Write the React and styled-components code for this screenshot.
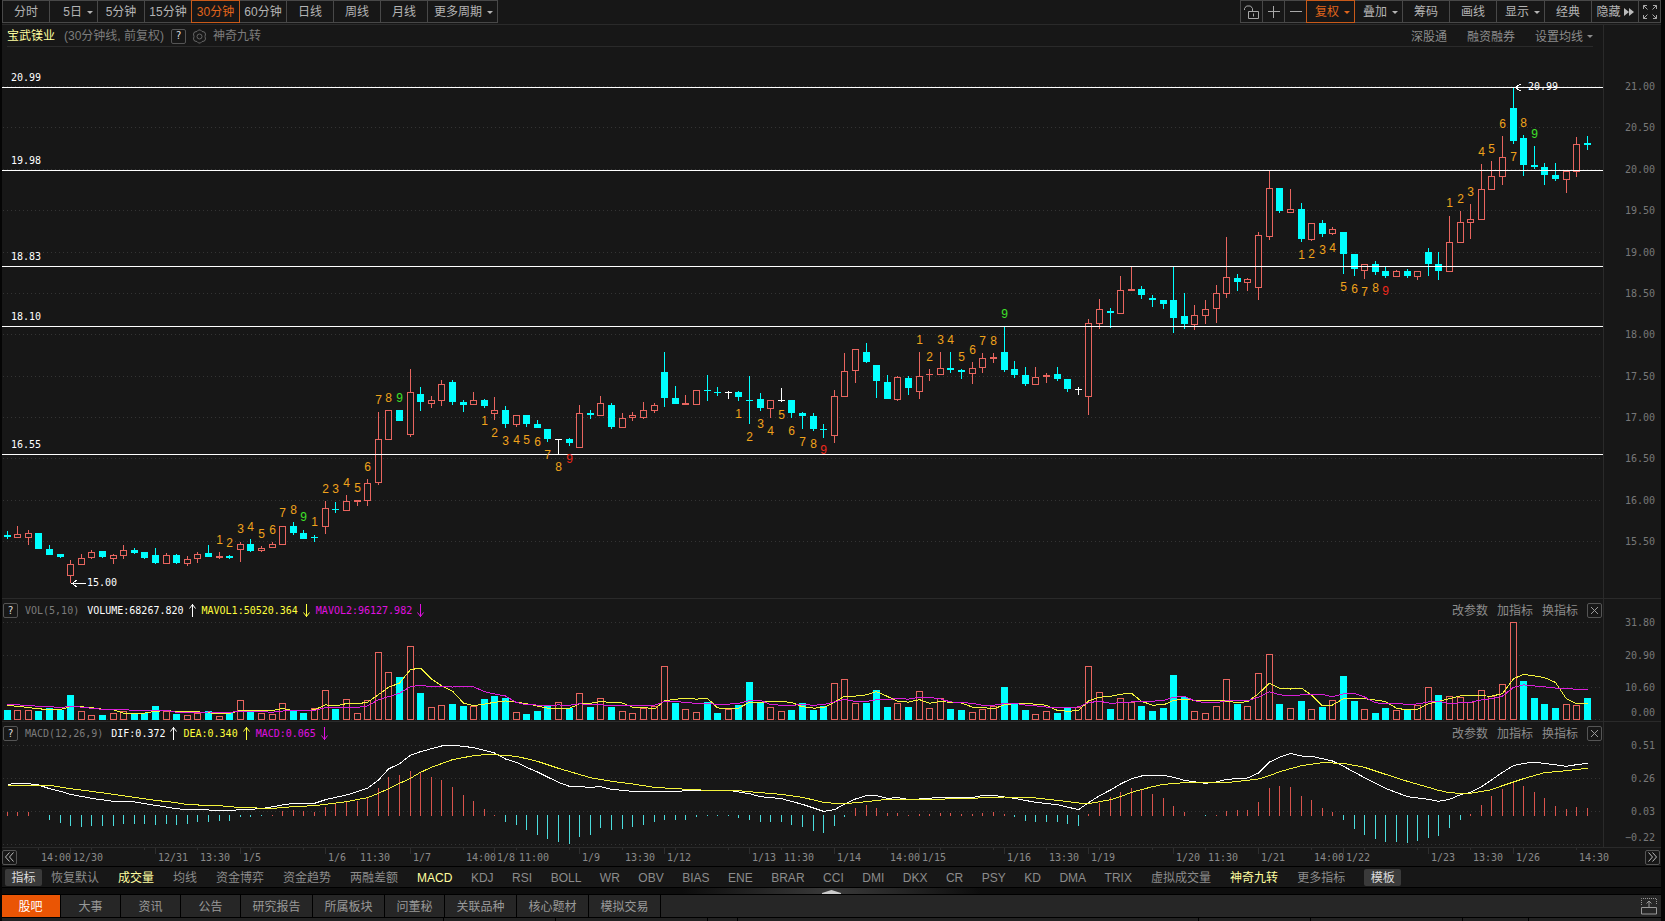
import React, { useLayoutEffect, useRef, useState } from "react";
import styled, { createGlobalStyle } from "styled-components";

const RED = "#e8655f";
const CYAN = "#00ffff";
const BG = "#171717";

// kind (r up, c down, w flat), high, body top, body bottom, low
const CANDLES = `
c 531 535 537 539|r 526 534 538 538|r 530 533 538 545|c 533 533 549 549|c 545 549 555 555
c 554 554 557 558|r 560 564 576 583|r 554 558 565 565|r 550 552 558 559|c 551 551 557 558
r 554 555 559 564|r 545 550 556 559|c 548 550 553 554|c 552 552 558 559|c 548 555 563 564
r 553 555 564 564|c 554 555 563 564|r 556 559 564 566|r 552 554 559 563|c 545 553 557 557
r 552 556 558 559|c 555 556 558 559|r 542 544 550 562|c 539 544 551 552|r 546 548 551 552
r 542 544 548 548|r 526 526 545 545|c 522 526 533 535|c 530 533 539 539|c 535 537 538 542
r 501 508 527 534|c 502 509 510 513|r 495 501 511 511|r 500 500 502 506|r 479 483 501 506
r 412 439 483 485|r 410 410 440 440|c 410 410 421 421|r 369 392 435 437|c 387 394 402 411
r 396 400 404 408|r 380 384 401 406|c 380 382 402 405|c 400 402 405 412|r 392 400 405 405
c 399 400 406 408|r 397 410 414 420|c 406 410 424 428|r 415 415 425 427|c 415 415 424 427
c 420 424 428 428|c 429 429 439 442|w 439 439 440 454|c 438 439 443 446|r 405 413 448 448
c 410 413 415 419|r 396 403 416 416|c 403 405 427 429|r 413 418 428 428|r 412 415 418 421
r 402 410 418 419|r 403 405 411 413|c 352 372 398 407|c 386 398 404 404|r 395 403 405 405
r 390 390 405 405|c 375 390 391 401|c 387 392 393 396|w 391 392 393 399|c 391 392 397 401
c 376 400 401 424|c 393 399 408 411|r 400 400 409 418|w 388 400 401 402|c 400 400 413 418
c 412 413 416 429|c 413 416 429 431|c 424 429 430 438|r 390 396 436 443|r 353 371 397 397
r 349 349 371 383|c 343 352 362 363|c 365 365 381 398|c 375 382 399 399|r 376 377 400 401
c 376 378 388 395|r 352 376 392 399|r 369 374 375 381|r 352 368 375 375|c 352 368 370 373
c 369 370 372 379|r 362 368 374 384|r 353 358 368 373|r 353 357 359 363|c 327 352 370 372
c 361 369 375 378|c 367 375 384 386|r 367 377 385 385|r 373 375 377 383|c 367 374 379 381
c 379 379 389 392|w 387 389 390 395|r 319 323 397 415|r 299 309 324 329|c 308 311 313 328
r 276 290 314 314|r 267 289 291 291|c 286 289 295 299|c 295 298 300 307|c 300 300 304 309
c 267 300 318 333|c 293 316 324 329|r 305 315 325 330|r 300 309 316 324|r 285 293 309 323
r 237 277 294 298|c 274 278 282 291|r 278 279 283 291|r 232 235 288 300|r 171 188 237 240
c 188 188 211 213|r 189 209 213 213|c 203 209 239 242|r 223 223 240 241|c 220 223 234 237
r 227 229 234 235|c 232 232 254 274|c 254 254 269 276|r 264 264 271 279|c 261 264 272 275
c 267 271 276 278|r 270 271 277 277|c 269 271 276 278|r 271 271 277 280|c 248 252 264 276
c 252 264 271 280|r 216 242 272 272|r 211 222 243 243|r 204 219 223 239|r 164 189 220 220
r 161 176 190 190|r 136 157 177 185|c 88 108 141 144|c 135 138 165 176|c 146 165 167 169
c 163 167 175 185|c 163 175 179 181|r 171 171 180 193|r 137 144 172 177|c 136 143 145 150`
  .trim()
  .split(/[|\n]/)
  .map((row) => {
    const [kind, ...rest] = row.split(" ");
    return [kind, ...rest.map(Number)];
  });

// candle index, digit, text centre
const COUNTS = [
  [20, 1, 540], [21, 2, 543], [22, 3, 529], [23, 4, 527], [24, 5, 534],
  [25, 6, 530], [26, 7, 513], [27, 8, 510], [28, 9, 517, "up"], [29, 1, 522],
  [30, 2, 489], [31, 3, 489], [32, 4, 483], [33, 5, 488], [34, 6, 467],
  [35, 7, 400], [36, 8, 398], [37, 9, 398, "up"],
  [45, 1, 421], [46, 2, 433], [47, 3, 441], [48, 4, 440], [49, 5, 440],
  [50, 6, 442], [51, 7, 455], [52, 8, 467], [53, 9, 459, "down"],
  [69, 1, 414], [70, 2, 437], [71, 3, 424], [72, 4, 431], [73, 5, 415],
  [74, 6, 431], [75, 7, 442], [76, 8, 444], [77, 9, 450, "down"],
  [86, 1, 340], [87, 2, 357], [88, 3, 340], [89, 4, 340], [90, 5, 357],
  [91, 6, 350], [92, 7, 341], [93, 8, 341], [94, 9, 314, "up"],
  [122, 1, 255], [123, 2, 254], [124, 3, 250], [125, 4, 248], [126, 5, 287],
  [127, 6, 289], [128, 7, 292], [129, 8, 288], [130, 9, 291, "down"],
  [136, 1, 203], [137, 2, 199], [138, 3, 192], [139, 4, 152], [140, 5, 149],
  [141, 6, 124], [142, 7, 157], [143, 8, 123], [144, 9, 134, "up"],
];
const COUNT_COLORS = { up: "#3fe02a", down: "#f0281c" };

const LEVELS = [
  ["20.99", 87],
  ["19.98", 170],
  ["18.83", 266],
  ["18.10", 326],
  ["16.55", 454],
];

const PRICE_TICKS = [
  ["21.00", 86], ["20.50", 127], ["20.00", 169], ["19.50", 210],
  ["19.00", 252], ["18.50", 293], ["18.00", 334], ["17.50", 376],
  ["17.00", 417], ["16.50", 458], ["16.00", 500], ["15.50", 541],
];

// negative volumes are down bars
const VOLUMES = [
  -11, 11, 11, -10, -13, -11, -27, 10, 5, -5, 7, 10, -7, -8, -15, 10, -6, 5, 8,
  -10, 4, -8, 21, -9, 7, 6, 18, -10, -8, 13, 32, -12, 23, 7, 21, 73, 51, -46,
  79, -29, 14, 16, -17, -15, 15, -22, -26, -24, 9, -6, -10, -15, 19, -13, 29,
  -14, 24, -14, 10, 7, 13, 15, 58, -18, 12, 9, -19, -7, 12, -16, -41, -18, 14,
  10, -11, -18, -11, -15, 40, 44, 18, -18, -32, -14, 18, -14, 31, 13, 24, -12,
  -11, 9, 12, 15, -35, -17, -11, 6, 10, -7, -13, 14, 58, 30, -12, 24, 19, -15,
  -10, -13, -48, -25, 10, 7, 15, 44, -17, 15, 50, 71, -17, 13, -20, 12, -14, 21,
  -47, -20, 12, -7, -13, 11, -11, 16, 35, -27, 26, 25, 19, 32, 26, 39, 105, -42,
  -24, -17, -13, 17, 16, -24,
];
const EARLIER_VOLUMES = [18, 18, 18, 18, 18, 17, 17, 17, 17];
const BAR_SCALE = 14 / 15;

const MACD_BARS = [
  4, 4, 4, 0, -5, -9, -12, -13, -12, -12, -12, -10, -10, -10, -11, -10, -11,
  -10, -8, -7, -6, -6, -2, -2, -1, 1, 5, 6, 5, 4, 10, 13, 16, 16, 20, 30, 42,
  44, 48, 46, 42, 39, 31, 22, 16, 8, 1, -7, -11, -16, -21, -26, -29, -31, -24,
  -21, -14, -16, -15, -13, -11, -8, -5, -5, -5, -2, -1, -1, -1, -3, -5, -8, -8,
  -8, -11, -13, -17, -19, -12, -2, 9, 12, 9, 3, 3, 1, 2, 2, 3, 3, 2, 2, 3, 4, 2,
  -2, -6, -7, -7, -8, -10, -12, 2, 14, 20, 26, 30, 29, 24, 19, 11, 4, 0, -1, 1,
  5, 6, 6, 15, 30, 32, 31, 21, 17, 9, 4, -5, -15, -21, -26, -29, -29, -30, -28,
  -25, -23, -14, -5, 2, 12, 21, 29, 35, 32, 26, 19, 11, 7, 10, 9,
];

// index, level (three steps to a pixel, counted from the top of the volume pane)
const DIF = [
  [0, 553], [1, 550], [2, 551], [3, 555], [4, 566], [5, 574], [6, 583],
  [8, 595], [10, 604], [12, 606], [14, 616], [16, 626], [17, 629], [21, 631],
  [24, 626], [26, 615], [27, 610], [29, 610], [30, 599], [32, 585], [34, 565],
  [35, 540], [36, 507], [37, 491], [38, 466], [39, 455], [40, 446], [41, 438],
  [42, 436], [43, 439], [44, 443], [45, 451], [46, 459], [47, 477], [48, 487],
  [49, 502], [50, 516], [51, 531], [52, 547], [53, 559], [54, 560], [55, 562],
  [56, 560], [57, 568], [59, 574], [63, 574], [65, 571], [68, 571], [70, 581],
  [71, 590], [73, 596], [75, 613], [76, 624], [77, 634], [78, 629], [79, 612],
  [80, 597], [81, 587], [82, 587], [83, 595], [84, 593], [85, 598], [86, 597],
  [88, 592], [91, 593], [92, 586], [93, 586], [95, 595], [97, 607], [99, 614],
  [101, 629], [102, 608], [103, 587], [104, 570], [105, 552], [106, 536],
  [107, 528], [109, 526], [110, 532], [111, 541], [113, 550], [114, 546],
  [115, 538], [117, 534], [118, 519], [119, 486], [120, 472], [121, 460],
  [122, 468], [123, 469], [124, 476], [125, 483], [126, 499], [128, 533],
  [130, 565], [132, 590], [134, 598], [135, 604], [136, 598], [137, 584],
  [138, 577], [139, 560], [140, 540], [141, 517], [142, 497], [143, 490],
  [144, 487], [145, 490], [147, 499], [148, 494], [149, 490],
];

const DEA = [
  [0, 556], [4, 556], [6, 566], [8, 574], [10, 583], [12, 592], [14, 601],
  [16, 608], [17, 614], [20, 617], [22, 623], [25, 625], [27, 620], [29, 617],
  [32, 605], [34, 593], [35, 580], [36, 566], [37, 550], [38, 535], [39, 517],
  [40, 502], [41, 491], [42, 479], [44, 467], [45, 464], [46, 464], [48, 469],
  [50, 484], [52, 505], [55, 533], [57, 544], [59, 552], [61, 562], [63, 566],
  [66, 571], [69, 572], [71, 578], [73, 583], [75, 592], [77, 607], [78, 610],
  [79, 611], [81, 605], [83, 598], [87, 598], [90, 596], [94, 591], [97, 594],
  [99, 601], [101, 609], [102, 611], [104, 599], [105, 590], [106, 577],
  [108, 560], [109, 553], [111, 548], [115, 548], [118, 537], [119, 527],
  [120, 515], [122, 497], [124, 488], [126, 490], [128, 502], [130, 523],
  [132, 544], [134, 562], [135, 571], [136, 578], [137, 580], [138, 580],
  [140, 569], [141, 557], [143, 536], [145, 518], [147, 512], [149, 505],
];

const TIMES = [
  [3, "14:00"], [6, "12/30"], [14, "12/31"], [18, "13:30"], [22, "1/5"],
  [30, "1/6"], [33, "11:30"], [38, "1/7"], [43, "14:00"], [46, "1/8"],
  [48, "11:00"], [54, "1/9"], [58, "13:30"], [62, "1/12"], [70, "1/13"],
  [73, "11:30"], [78, "1/14"], [83, "14:00"], [86, "1/15"], [94, "1/16"],
  [98, "13:30"], [102, "1/19"], [110, "1/20"], [113, "11:30"], [118, "1/21"],
  [123, "14:00"], [126, "1/22"], [134, "1/23"], [138, "13:30"], [142, "1/26"],
  [148, "14:30"],
];

const PERIODS = [
  { name: "分时" },
  { name: "5日", caret: true, wide: true },
  { name: "5分钟" },
  { name: "15分钟" },
  { name: "30分钟", active: true, wide: true },
  { name: "60分钟" },
  { name: "日线" },
  { name: "周线" },
  { name: "月线" },
  { name: "更多周期", caret: true, size: 71 },
];

const TOOLS = [
  { name: "复权", caret: true, active: true, wide: true },
  { name: "叠加", caret: true, wide: true },
  { name: "筹码" },
  { name: "画线" },
  { name: "显示", caret: true, wide: true },
  { name: "经典" },
];

const STUDIES = [
  "MACD", "KDJ", "RSI", "BOLL", "WR", "OBV", "BIAS", "ENE", "BRAR", "CCI",
  "DMI", "DKX", "CR", "PSY", "KD", "DMA", "TRIX",
];

const TABS = [
  "股吧", "大事", "资讯", "公告", "研究报告", "所属板块", "问董秘", "关联品种",
  "核心题材", "模拟交易",
];

const FOOTER_CELLS = [442, 112, 152, 30, 461, 112, 152, 66];

const xAt = (index, width) => Math.round(4.5 + ((width - 10) / 150) * index);

const movingAverage = (count) => {
  const all = [...EARLIER_VOLUMES, ...VOLUMES].map(Math.abs);
  return VOLUMES.map((_, i) => {
    const end = i + EARLIER_VOLUMES.length + 1;
    return all.slice(end - count, end).reduce((a, b) => a + b, 0) / count;
  });
};

const toPoints = (pairs, width) =>
  pairs.map(([i, y]) => `${xAt(i, width) + 0.5},${y}`).join(" ");

function useWidth() {
  const ref = useRef(null);
  const [width, setWidth] = useState(1601);
  useLayoutEffect(() => {
    const update = () => setWidth(ref.current.clientWidth);
    update();
    const observer = new ResizeObserver(update);
    observer.observe(ref.current);
    return () => observer.disconnect();
  }, []);
  return [ref, width];
}

function Grid({ lines, width }) {
  return lines.map((y) => (
    <line
      key={y}
      x1="1"
      x2={width}
      y1={y + 0.5}
      y2={y + 0.5}
      stroke="#343434"
      strokeDasharray="1 3"
    />
  ));
}

function Bar({ x, y, height, hollow }) {
  return hollow ? (
    <rect
      x={x - 2.5}
      y={y + 0.5}
      width="6"
      height={Math.max(height - 1, 1)}
      fill={BG}
      stroke={RED}
    />
  ) : (
    <rect x={x - 3} y={y} width="7" height={height} fill={CYAN} />
  );
}

function Candle({ x, candle }) {
  const [kind, high, top, bottom, low] = candle;
  const color = { r: RED, c: CYAN, w: "#fff" }[kind];
  const hollow = kind === "r" && bottom - top > 2;
  return (
    <g>
      <rect x={x} y={high} width="1" height={low - high} fill={color} />
      {hollow ? (
        <Bar x={x} y={top} height={bottom - top} hollow />
      ) : (
        <rect
          x={x - 3}
          y={top}
          width="7"
          height={bottom - top}
          fill={color}
        />
      )}
    </g>
  );
}

function PriceChart({ width }) {
  const peak = xAt(142, width);
  const trough = xAt(6, width);
  return (
    <Plot width={width} height="551" viewBox={`0 47 ${width} 551`}>
      <Grid lines={PRICE_TICKS.map(([, y]) => y)} width={width} />
      {CANDLES.map((candle, i) => (
        <Candle key={i} x={xAt(i, width)} candle={candle} />
      ))}
      {LEVELS.map(([label, y]) => (
        <g key={label}>
          <rect x="0" y={y} width={width} height="1" fill="#fff" />
          <NumberText x="9" y={y - 6} fill="#fff">
            {label}
          </NumberText>
        </g>
      ))}
      {COUNTS.map(([i, digit, y, end]) => (
        <CountText
          key={i}
          x={xAt(i, width) + 0.5}
          y={y + 4}
          fill={COUNT_COLORS[end] || "#f0a31c"}
        >
          {digit}
        </CountText>
      ))}
      <path d={`M${peak + 8} 84l-6 3.5l6 3.5`} fill="none" stroke="#fff" />
      <NumberText x={peak + 15} y="90" fill="#fff">
        20.99
      </NumberText>
      <path
        d={`M${trough + 7} 580l-5 3.5l5 3.5M${trough + 2} 583.5h14`}
        fill="none"
        stroke="#fff"
      />
      <NumberText x={trough + 17} y="586" fill="#fff">
        15.00
      </NumberText>
    </Plot>
  );
}

function VolumeChart({ width }) {
  const line = (count) =>
    toPoints(
      movingAverage(count).map((v, i) => [i, 720 - v * BAR_SCALE]),
      width
    );
  return (
    <Plot width={width} height="100" viewBox={`0 621 ${width} 100`}>
      <Grid lines={[622, 655, 687, 719]} width={width} />
      {VOLUMES.map((v, i) => {
        const height = Math.round(Math.abs(v) * BAR_SCALE);
        return (
          <Bar
            key={i}
            x={xAt(i, width)}
            y={720 - height}
            height={height}
            hollow={v > 0}
          />
        );
      })}
      <polyline points={line(5)} fill="none" stroke="#f4f43c" />
      <polyline points={line(10)} fill="none" stroke="#d81fd8" />
    </Plot>
  );
}

function MacdChart({ width }) {
  const scale = (pairs) => pairs.map(([i, v]) => [i, 600 + v / 3]);
  return (
    <Plot width={width} height="103" viewBox={`0 744 ${width} 103`}>
      <Grid lines={[745, 778, 811, 844]} width={width} />
      {MACD_BARS.map((v, i) => {
        const height = Math.round(Math.abs(v) * BAR_SCALE);
        return (
          <rect
            key={i}
            x={xAt(i, width)}
            y={v > 0 ? 816 - height : 815}
            width="1"
            height={height}
            fill={v > 0 ? "#d9534c" : "#4adcdc"}
          />
        );
      })}
      <polyline points={toPoints(scale(DIF), width)} fill="none" stroke="#fff" />
      <polyline
        points={toPoints(scale(DEA), width)}
        fill="none"
        stroke="#f4f43c"
      />
    </Plot>
  );
}

function TimeScale({ width }) {
  const minor = Array.from({ length: 30 }, (_, i) => i * 5 + 3);
  // the last label runs on under the price axis
  const full = width + 30;
  return (
    <Plot width={full} height="18" viewBox={`0 848 ${full} 18`}>
      {minor.map((i) => (
        <rect key={i} x={xAt(i, width)} y="848" width="1" height="2" fill="#2e2e2e" />
      ))}
      {TIMES.map(([i, label]) => (
        <g key={i}>
          {label.includes("/") && (
            <rect x={xAt(i, width)} y="848" width="1" height="6" fill="#2e2e2e" />
          )}
          <NumberText x={xAt(i, width) + 3} y="861" fill="#8a8a8a">
            {label}
          </NumberText>
        </g>
      ))}
    </Plot>
  );
}

function Axis({ top, height, ticks }) {
  return (
    <Plot width="57" height={height} viewBox={`0 ${top} 57 ${height}`}>
      {ticks.map(([label, y]) => (
        <NumberText key={label} x="51" y={y + 4} fill="#777" textAnchor="end">
          {label}
        </NumberText>
      ))}
    </Plot>
  );
}

function Arrow({ down, color }) {
  return (
    <ArrowSvg width="18" height="15" viewBox="0 0 18 15" stroke={color}>
      <path d={down ? "M8.5 1v13M5.5 9.5l3 4l3-4" : "M8.5 14V1M5.5 5.5l3-4l3 4"} />
    </ArrowSvg>
  );
}

function StudyHeader({ name, values }) {
  return (
    <Header>
      <BoxButton aria-label={`${name} 说明`}>?</BoxButton>
      <StudyName>{name}</StudyName>
      {values.map(({ text, color, down }) => (
        <StudyValue key={text} color={color}>
          {text}
          <Arrow down={down} color={color} />
        </StudyValue>
      ))}
      <HeaderActions>
        <LinkButton>改参数</LinkButton>
        <LinkButton>加指标</LinkButton>
        <LinkButton>换指标</LinkButton>
        <BoxButton aria-label="关闭">
          <svg width="9" height="9" viewBox="0 0 9 9" stroke="#999">
            <path d="M1 1l7 7M8 1l-7 7" />
          </svg>
        </BoxButton>
      </HeaderActions>
    </Header>
  );
}

function LockIcon() {
  return (
    <Icon width="15" height="16" viewBox="0 0 15 16">
      <path d="M.5 6V4.5l2-2.500h4l2 2.500V7M4.500 7.500h10v7h-10zM9.500 9.500v3" />
    </Icon>
  );
}

function ExpandIcon() {
  return (
    <Icon width="14" height="14" viewBox="0 0 14 14">
      <path d="M.5 4V.5H4M.5.5l4 4M10 .5h3.500V4M13.500.5l-4 4M.5 10v3.500H4M.5 13.500l4-4M10 13.500h3.500V10M13.500 13.500l-4-4" />
    </Icon>
  );
}

export default function App() {
  const [plotRef, width] = useWidth();

  return (
    <Screen>
      <GlobalStyle />
      <Toolbar>
        <ButtonGroup>
          {PERIODS.map(({ name, caret, active, wide, size }) => (
            <ToolButton
              key={name}
              $active={active}
              $caret={caret}
              $size={size}
              $wide={wide}
            >
              {name}
              {caret && <Caret />}
            </ToolButton>
          ))}
        </ButtonGroup>
        <ButtonGroup>
          <ToolButton $size={23} aria-label="锁定">
            <LockIcon />
          </ToolButton>
          <ToolButton $size={23} aria-label="放大">
            <Icon width="12" height="12" viewBox="0 0 12 12">
              <path d="M5.5 0v12M0 5.5h12" />
            </Icon>
          </ToolButton>
          <ToolButton $size={23} aria-label="缩小">
            <Icon width="12" height="12" viewBox="0 0 12 12">
              <path d="M0 5.5h12" />
            </Icon>
          </ToolButton>
          {TOOLS.map(({ name, caret, active, wide }) => (
            <ToolButton key={name} $active={active} $caret={caret} $wide={wide}>
              {name}
              {caret && <Caret />}
            </ToolButton>
          ))}
          <ToolButton $tight>
            隐藏
            <svg width="10" height="8" viewBox="0 0 10 8" fill="#bbb">
              <path d="M0 0l5 4l-5 4zM5 0l5 4l-5 4z" />
            </svg>
          </ToolButton>
          <ToolButton $size={23} aria-label="全屏">
            <ExpandIcon />
          </ToolButton>
        </ButtonGroup>
      </Toolbar>

      <Pane>
        <PlotColumn ref={plotRef}>
          <TitleBar>
            <StockName>宝武镁业</StockName>
            <TitleNote>(30分钟线, 前复权)</TitleNote>
            <BoxButton aria-label="说明">?</BoxButton>
            <IconButton aria-label="设置">
              <svg width="15" height="15" viewBox="0 0 15 15" fill="none" stroke="#666">
                <path d="M5 2.5L6.5 1h2L10 2.5l2.5.5l1 2l-.5 2.500l.5 2.500l-1 2l-2.500.5L8.500 14h-2L5 12.500L2.500 12l-1-2l.5-2.500L1.500 5l1-2z" />
                <circle cx="7.5" cy="7.5" r="2.5" />
              </svg>
            </IconButton>
            <TitleNote>神奇九转</TitleNote>
            <TitleLinks>
              <LinkButton>深股通</LinkButton>
              <LinkButton>融资融券</LinkButton>
              <LinkButton>
                设置均线
                <Caret />
              </LinkButton>
            </TitleLinks>
          </TitleBar>
          <PriceChart width={width} />
        </PlotColumn>
        <AxisColumn>
          <Axis top={25} height={573} ticks={PRICE_TICKS} />
        </AxisColumn>
      </Pane>

      <Pane>
        <PlotColumn>
          <StudyHeader
            name="VOL(5,10)"
            values={[
              { text: "VOLUME:68267.820", color: "#fff" },
              { text: "MAVOL1:50520.364", color: "#ffff3c", down: true },
              { text: "MAVOL2:96127.982", color: "#e010e0", down: true },
            ]}
          />
          <VolumeChart width={width} />
        </PlotColumn>
        <AxisColumn>
          <Axis
            top={599}
            height={122}
            ticks={[["31.80", 622], ["20.90", 655], ["10.60", 687], ["0.00", 712]]}
          />
        </AxisColumn>
      </Pane>

      <Pane>
        <PlotColumn>
          <StudyHeader
            name="MACD(12,26,9)"
            values={[
              { text: "DIF:0.372", color: "#fff" },
              { text: "DEA:0.340", color: "#ffff3c" },
              { text: "MACD:0.065", color: "#e010e0", down: true },
            ]}
          />
          <MacdChart width={width} />
        </PlotColumn>
        <AxisColumn>
          <Axis
            top={722}
            height={125}
            ticks={[["0.51", 745], ["0.26", 778], ["0.03", 811], ["−0.22", 837]]}
          />
        </AxisColumn>
      </Pane>

      <TimeRow>
        <TimeTrack>
          <TimeScale width={width} />
          <BoxButton aria-label="向左">
            <svg width="9" height="10" viewBox="0 0 9 10" fill="none" stroke="#bbb">
              <path d="M4.5.5l-4 4.5l4 4.5M8.5.5l-4 4.5l4 4.5" />
            </svg>
          </BoxButton>
        </TimeTrack>
        <BoxButton aria-label="向右">
          <svg width="9" height="10" viewBox="0 0 9 10" fill="none" stroke="#bbb">
            <path d="M.5.5l4 4.5l-4 4.5M4.5.5l4 4.5l-4 4.5" />
          </svg>
        </BoxButton>
      </TimeRow>

      <StudyBar>
        <Chip>指标</Chip>
        <LinkButton>恢复默认</LinkButton>
        <LinkButton $on>成交量</LinkButton>
        <LinkButton>均线</LinkButton>
        <LinkButton>资金博弈</LinkButton>
        <LinkButton>资金趋势</LinkButton>
        <LinkButton>两融差额</LinkButton>
        <StudyList>
          {STUDIES.map((name) => (
            <LinkButton key={name} $on={name === "MACD"}>
              {name}
            </LinkButton>
          ))}
        </StudyList>
        <LinkButton>虚拟成交量</LinkButton>
        <LinkButton $on>神奇九转</LinkButton>
        <LinkButton>更多指标</LinkButton>
        <Chip>模板</Chip>
      </StudyBar>

      <Splitter>
        <svg width="19" height="4" viewBox="0 0 19 4" fill="#ccc">
          <path d="M9.5 0L19 3v1H0V3z" />
        </svg>
      </Splitter>

      <TabBar>
        {TABS.map((name, i) => (
          <Tab key={name} $active={i === 0} $long={name.length > 3}>
            {name}
          </Tab>
        ))}
        <ExportButton aria-label="弹出">
          <svg width="16" height="17" viewBox="0 0 16 17" fill="none" stroke="#999">
            <path d="M.5 7V.5h15V7" strokeDasharray="1 1" />
            <path d="M.5 9.5h15v6.5H.5zM8 9V3M5.5 5.5L8 3l2.5 2.5" />
          </svg>
        </ExportButton>
      </TabBar>
      <Footer>
        {FOOTER_CELLS.map((size, i) => (
          <FooterCell key={i} $size={size} />
        ))}
      </Footer>
    </Screen>
  );
}

const GlobalStyle = createGlobalStyle`
  * {
    box-sizing: border-box;
  }
  body {
    background: #000;
    margin: 0;
  }
  button {
    background: none;
    border: 0;
    color: inherit;
    cursor: pointer;
    font: inherit;
    padding: 0;
    white-space: nowrap;
  }
  svg {
    flex: none;
  }
`;

const Screen = styled.div`
  background: ${BG};
  border-left: 2px solid #050505;
  border-right: 4px solid #050505;
  color: #a8a8a8;
  display: flex;
  flex-direction: column;
  font-family: "Liberation Sans", "Noto Sans CJK SC", sans-serif;
  font-size: 12px;
  line-height: 16px;
  min-height: 100vh;
  overflow: hidden;
`;

const Toolbar = styled.div`
  border-bottom: 1px solid #2a2a2a;
  display: flex;
  height: 25px;
  justify-content: space-between;
`;

const ButtonGroup = styled.div`
  display: flex;
`;

const ToolButton = styled.button`
  align-items: center;
  border: 1px solid ${({ $active }) => ($active ? "#c85a1a" : "#484848")};
  color: ${({ $active }) => ($active ? "#e0651c" : "#b4b4b4")};
  display: flex;
  flex: none;
  gap: ${({ $tight }) => ($tight ? 3 : 5)}px;
  height: 23px;
  justify-content: ${({ $caret }) => ($caret ? "flex-end" : "center")};
  padding: 1px ${({ $caret }) => ($caret ? 4 : 0)}px 0 0;
  position: relative;
  width: ${({ $size, $wide }) => $size || ($wide ? 49 : 48)}px;
  z-index: ${({ $active }) => ($active ? 1 : 0)};
  & + & {
    margin-left: -1px;
  }
`;

const Caret = styled.i`
  border: 3px solid transparent;
  border-bottom: 0;
  border-top-color: currentColor;
`;

const Icon = styled.svg`
  fill: none;
  stroke: #a8a8a8;
`;

const Pane = styled.section`
  border-bottom: 1px solid #2a2a2a;
  display: grid;
  grid-template-columns: minmax(0, 1fr) 58px;
`;

const PlotColumn = styled.div`
  min-width: 0;
`;

const AxisColumn = styled.div`
  border-left: 1px solid #2a2a2a;
`;

const Plot = styled.svg`
  display: block;
  shape-rendering: crispEdges;
`;

const NumberText = styled.text`
  font-family: "DejaVu Sans Mono", monospace;
  font-size: 10px;
`;

const CountText = styled.text`
  font-size: 12px;
  text-anchor: middle;
`;

const TitleBar = styled.div`
  align-items: center;
  border-bottom: 1px solid #2a2a2a;
  display: flex;
  height: 22px;
  margin: 0 10px 0 5px;
  padding-top: 1px;
`;

const StockName = styled.h1`
  color: #ffffa0;
  font-size: 12px;
  font-weight: normal;
  margin: 0 9px 0 0;
`;

const TitleNote = styled.span`
  color: #7c7c7c;
  margin-right: 7px;
`;

const TitleLinks = styled.div`
  display: flex;
  gap: 20px;
  margin-left: auto;
`;

const BoxButton = styled.button`
  align-items: center;
  border: 1px solid #555;
  border-radius: 2px;
  color: #ddd;
  display: flex;
  flex: none;
  font-family: "DejaVu Sans Mono", monospace;
  font-size: 10px;
  height: 15px;
  justify-content: center;
  width: 15px;
`;

const IconButton = styled.button`
  display: flex;
  margin: 0 6px;
`;

const LinkButton = styled.button`
  align-items: center;
  color: ${({ $on }) => ($on ? "#ffffa0" : "#8c8c8c")};
  display: flex;
  gap: 4px;
  padding-top: 1px;
`;

const Header = styled.div`
  align-items: center;
  display: flex;
  height: 22px;
  padding: 1px 1px 0;
`;

const StudyName = styled.span`
  color: #7c7c7c;
  font-family: "DejaVu Sans Mono", monospace;
  font-size: 10px;
  margin: 0 8px 0 7px;
`;

const StudyValue = styled.span`
  align-items: center;
  color: ${({ color }) => color};
  display: flex;
  font-family: "DejaVu Sans Mono", monospace;
  font-size: 10px;
`;

const ArrowSvg = styled.svg`
  fill: none;
`;

const HeaderActions = styled.div`
  align-items: center;
  display: flex;
  gap: 9px;
  margin-left: auto;
`;

const TimeRow = styled.div`
  align-items: center;
  border-bottom: 1px solid #000;
  display: grid;
  grid-template-columns: minmax(0, 1fr) 58px;
  height: 19px;
  > button {
    justify-self: end;
    margin-right: 1px;
  }
`;

const TimeTrack = styled.div`
  align-items: center;
  display: grid;
  min-width: 0;
  > * {
    grid-area: 1 / 1;
  }
`;

const StudyBar = styled.nav`
  align-items: center;
  border-bottom: 1px solid #000;
  display: flex;
  gap: 19px;
  height: 21px;
  padding-left: 3px;
`;

const StudyList = styled.div`
  display: flex;
  flex: none;
  justify-content: space-between;
  width: 715px;
`;

const Chip = styled.button`
  background: #3a3a3a;
  border-radius: 2px;
  color: #ddd;
  height: 17px;
  padding-top: 1px;
  width: 37px;
  &:first-child {
    margin-right: -10px;
  }
`;

const Splitter = styled.div`
  align-items: flex-end;
  background: linear-gradient(90deg, #0d0d0d 41%, #3a3a3a 50%, #0d0d0d 59%);
  border-bottom: 1px solid #000;
  display: flex;
  height: 7px;
  justify-content: center;
`;

const TabBar = styled.nav`
  background: #262626;
  border-bottom: 1px solid #000;
  display: flex;
  height: 23px;
  margin-left: -1px;
`;

const Tab = styled.button`
  background: ${({ $active }) => ($active ? "#ea5504" : "#262626")};
  border-right: 1px solid #000;
  color: ${({ $active }) => ($active ? "#fff" : "#999")};
  flex: none;
  padding-top: 1px;
  width: ${({ $long }) => ($long ? 72 : 60)}px;
`;

const ExportButton = styled.button`
  align-items: center;
  display: flex;
  margin: 0 4px 0 auto;
`;

const Footer = styled.footer`
  background: #222;
  display: flex;
  flex: 1;
  min-height: 3px;
`;

const FooterCell = styled.span`
  border-right: 1px solid #000;
  width: ${({ $size }) => $size}px;
`;
